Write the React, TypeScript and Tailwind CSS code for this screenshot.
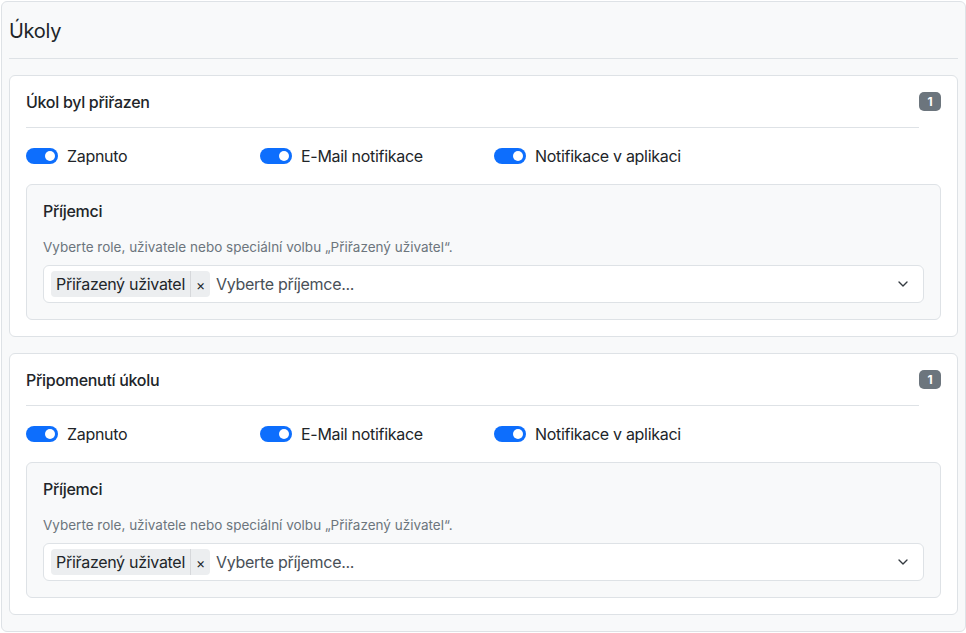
import { ChevronDown } from "lucide-react";

function Toggle({ label }: { label: string }) {
    return (
        <label className="w-[234px] flex items-center gap-[9px] text-[16px] tracking-[-0.3px] text-[#212529]">
            <span className="relative w-8 h-4 rounded-full bg-[#0d6efd] shrink-0">
                <span className="absolute right-[3px] top-[3px] w-[10px] h-[10px] rounded-full bg-white" />
            </span>
            {label}
        </label>
    );
}

function Section({ title }: { title: string }) {
    return (
        <div className="bg-white border border-[#dee2e6] rounded-md px-[16px] pt-[14px] pb-[16px]">
            <div className="flex items-center justify-between pb-[13px] border-b border-[#dee2e6] mr-[22px] relative">
                <h3 className="text-[16px] font-medium tracking-[-0.3px] text-[#212529] leading-6">{title}</h3>
                <span className="absolute -right-[22px] top-[2px] w-[22px] h-[19px] flex items-center justify-center bg-[#6c757d] text-white text-[12px] font-bold leading-none rounded-[5px]">
                    1
                </span>
            </div>
            <div className="flex mt-[16px]">
                <Toggle label="Zapnuto" />
                <Toggle label="E-Mail notifikace" />
                <Toggle label="Notifikace v aplikaci" />
            </div>
            <div className="mt-[16px] bg-[#f8f9fa] border border-[#dee2e6] rounded-md px-[16px] pt-[14px] pb-[16px]">
                <h4 className="text-[16px] font-medium tracking-[-0.3px] text-[#212529] leading-6">Příjemci</h4>
                <p className="mt-[14px] text-[13.5px] text-[#6c757d] leading-5">
                    Vyberte role, uživatele nebo speciální volbu „Přiřazený uživatel“.
                </p>
                <div className="mt-[8px] h-[38px] bg-white border border-[#dee2e6] rounded-md flex items-center pl-[7px] pr-[12px] tracking-[-0.3px]">
                    <span className="flex items-center h-[26px] bg-[#eceef0] rounded-[4px] text-[16px] text-[#212529]">
                        <span className="px-[5px]">Přiřazený uživatel</span>
                        <span className="h-full border-l border-[#d6d8db] px-[5px] flex items-center text-[14px]">×</span>
                    </span>
                    <span className="ml-[6px] text-[16px] text-[#495057]">Vyberte příjemce...</span>
                    <ChevronDown className="ml-auto text-[#343a40]" size={16} strokeWidth={2} />
                </div>
            </div>
        </div>
    );
}

export default function App() {
    return (
        <div className="w-[966px] h-[633px] bg-white pl-[1px] pt-[1px]" style={{ fontFamily: "Inter, 'Noto Sans', sans-serif" }}>
            <div className="h-[631px] bg-[#f8f9fa] border border-[#dee2e6] rounded-md px-[7px] pt-[15px]">
                <h2 className="text-[20px] tracking-[-0.3px] text-[#212529] leading-7 pb-[13px] border-b border-[#dee2e6]">Úkoly</h2>
                <div className="mt-[16px] flex flex-col gap-[16px]">
                    <Section title="Úkol byl přiřazen" />
                    <Section title="Připomenutí úkolu" />
                </div>
            </div>
        </div>
    );
}
